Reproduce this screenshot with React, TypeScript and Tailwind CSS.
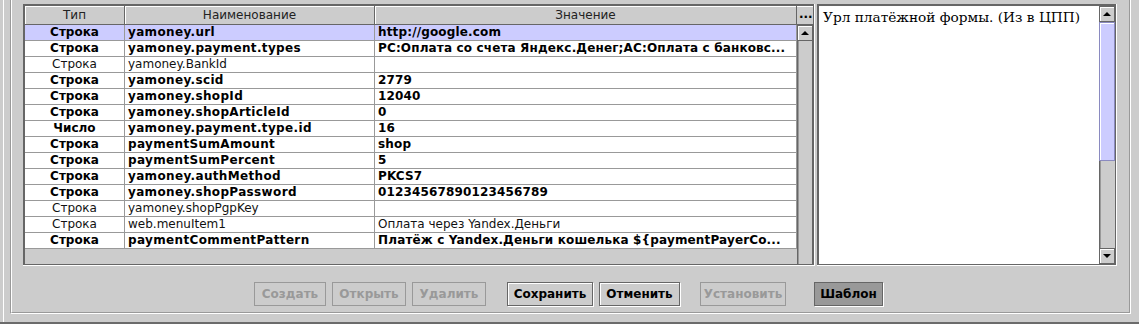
import React from 'react'

type Row = { type: string; name: string; value: string; bold: boolean }

const rows: Row[] = [
  { type: 'Строка', name: 'yamoney.url', value: 'http://google.com', bold: true },
  { type: 'Строка', name: 'yamoney.payment.types', value: 'PC:Оплата со счета Яндекс.Денег;AC:Оплата с банковс...', bold: true },
  { type: 'Строка', name: 'yamoney.BankId', value: '', bold: false },
  { type: 'Строка', name: 'yamoney.scid', value: '2779', bold: true },
  { type: 'Строка', name: 'yamoney.shopId', value: '12040', bold: true },
  { type: 'Строка', name: 'yamoney.shopArticleId', value: '0', bold: true },
  { type: 'Число', name: 'yamoney.payment.type.id', value: '16', bold: true },
  { type: 'Строка', name: 'paymentSumAmount', value: 'shop', bold: true },
  { type: 'Строка', name: 'paymentSumPercent', value: '5', bold: true },
  { type: 'Строка', name: 'yamoney.authMethod', value: 'PKCS7', bold: true },
  { type: 'Строка', name: 'yamoney.shopPassword', value: '01234567890123456789', bold: true },
  { type: 'Строка', name: 'yamoney.shopPgpKey', value: '', bold: false },
  { type: 'Строка', name: 'web.menuItem1', value: 'Оплата через Yandex.Деньги', bold: false },
  { type: 'Строка', name: 'paymentCommentPattern', value: 'Платёж с Yandex.Деньги кошелька ${paymentPayerCo...', bold: true },
]

function Arrow({ up }: { up: boolean }) {
  return (
    <svg width="8" height="4" viewBox="0 0 8 4" className="block">
      <polygon points={up ? '4,0 8,4 0,4' : '0,0 8,0 4,4'} fill="#000" />
    </svg>
  )
}

function ScrollButton({ up }: { up: boolean }) {
  return (
    <div className="flex h-[16px] w-[16px] shrink-0 items-center justify-center border border-[#666] bg-[#cccccc] shadow-[inset_1px_1px_0_#fff]">
      <Arrow up={up} />
    </div>
  )
}

type BtnState = 'off' | 'on' | 'pressed'

function Btn({ label, state, className }: { label: string; state: BtnState; className: string }) {
  const look =
    state === 'off'
      ? 'border-[#999] text-[#999]'
      : state === 'on'
        ? 'border-[#666] text-black shadow-[inset_1px_1px_0_#fff,1px_1px_0_#fff]'
        : 'border-[#666] bg-[#999] text-black shadow-[1px_1px_0_#fff]'
  return (
    <div className={`flex h-[24px] items-center justify-center border text-[12px] font-bold leading-[22px] ${look} ${className}`}>
      {label}
    </div>
  )
}

export default function App() {
  return (
    <div className="flex h-[324px] w-[1139px] flex-col overflow-hidden bg-[#cccccc] font-['DejaVu_Sans',sans-serif] text-[12px] text-black">
      <div className="flex h-[322px] pl-[3px]">
        <div className="flex flex-1 border-l border-white pl-[6px]">
          {/* etched panel */}
          <div className="h-[314px] w-[1121px] border-b border-l border-r border-b-white border-l-[#999] border-r-white">
            <div className="flex h-[313px] flex-col border-b border-l border-r border-b-[#999] border-l-white border-r-[#999] pl-[11px] pt-[4px]">
              <div className="flex h-[262px] gap-[2px]">
                {/* table */}
                <div className="w-[792px] border-b border-r border-white">
                  <div className="flex h-[261px] border-b border-l-2 border-r border-t-2 border-[#666]">
                    <div className="flex w-[772px] flex-col">
                      <div className="flex h-[19px] shrink-0">
                        {[
                          ['Тип', 'w-[100px]'],
                          ['Наименование', 'w-[250px]'],
                          ['Значение', 'w-[422px]'],
                        ].map(([h, w]) => (
                          <div
                            key={h}
                            className={`${w} border-b border-r border-[#666] text-center leading-[18px] text-[#222] shadow-[inset_1px_1px_0_#fff]`}
                          >
                            {h}
                          </div>
                        ))}
                      </div>
                      {rows.map((r, i) => (
                        <div
                          key={r.name}
                          className={`flex h-[16px] shrink-0 whitespace-nowrap leading-[15px] ${i === 0 ? 'bg-[#ccccff]' : 'bg-white'} ${r.bold ? 'font-bold' : 'font-normal text-[#111]'}`}
                        >
                          <div className="w-[100px] border-b border-r border-[#999] text-center">{r.type}</div>
                          <div className={`w-[250px] overflow-hidden border-b border-r border-[#999] pl-[3px] ${r.bold ? 'tracking-[0.35px]' : ''}`}>
                            {r.name}
                          </div>
                          <div className={`w-[422px] overflow-hidden border-b border-r border-[#999] pl-[3px] ${r.bold ? 'tracking-[0.15px]' : ''}`}>
                            {r.value}
                          </div>
                        </div>
                      ))}
                    </div>
                    <div className="flex w-[16px] flex-col">
                      <div className="h-[19px] shrink-0 border-b border-[#666] pl-[2px] text-[12px] font-bold leading-[16px] shadow-[inset_0_1px_0_#fff]">
                        ...
                      </div>
                      <ScrollButton up />
                      <div className="flex-1 border-l border-r border-[#666] shadow-[inset_1px_0_0_#999]" />
                    </div>
                  </div>
                </div>

                {/* description pane */}
                <div className="w-[300px] border-b border-r border-white">
                  <div className="flex h-[261px] border-b border-l-2 border-r border-t-2 border-[#666]">
                    <div className="w-[280px] bg-white pl-[4px] pt-[2px] font-['DejaVu_Serif',serif] text-[13.7px] leading-[18px] text-black">
                      Урл платёжной формы. (Из в ЦПП)
                    </div>
                    <div className="flex w-[16px] flex-col">
                      <ScrollButton up />
                      <div className="h-[139px] shrink-0 border border-[#8a8ac0] bg-[#ccccff] p-[2px] shadow-[inset_1px_1px_0_#fff]">
                        <div className="h-full bg-[image:radial-gradient(#7d7db3_0.6px,transparent_0.7px)] bg-[length:2px_2px]" />
                      </div>
                      <div className="flex-1 border-l border-[#666] shadow-[inset_1px_0_0_#999]" />
                      <ScrollButton up={false} />
                    </div>
                  </div>
                </div>
              </div>

              {/* buttons */}
              <div className="mt-[16px] flex h-[24px] items-start">
                <Btn label="Создать" state="off" className="ml-[231px] w-[72px]" />
                <Btn label="Открыть" state="off" className="ml-[6px] w-[74px]" />
                <Btn label="Удалить" state="off" className="ml-[6px] w-[74px]" />
                <Btn label="Сохранить" state="on" className="ml-[21px] w-[86px]" />
                <Btn label="Отменить" state="on" className="ml-[6px] w-[81px]" />
                <Btn label="Установить" state="off" className="ml-[20px] w-[86px]" />
                <Btn label="Шаблон" state="pressed" className="ml-[28px] w-[69px]" />
              </div>
            </div>
          </div>
        </div>
      </div>
      <div className="h-[2px] shrink-0 bg-[#6b6b6b]" />
    </div>
  )
}
